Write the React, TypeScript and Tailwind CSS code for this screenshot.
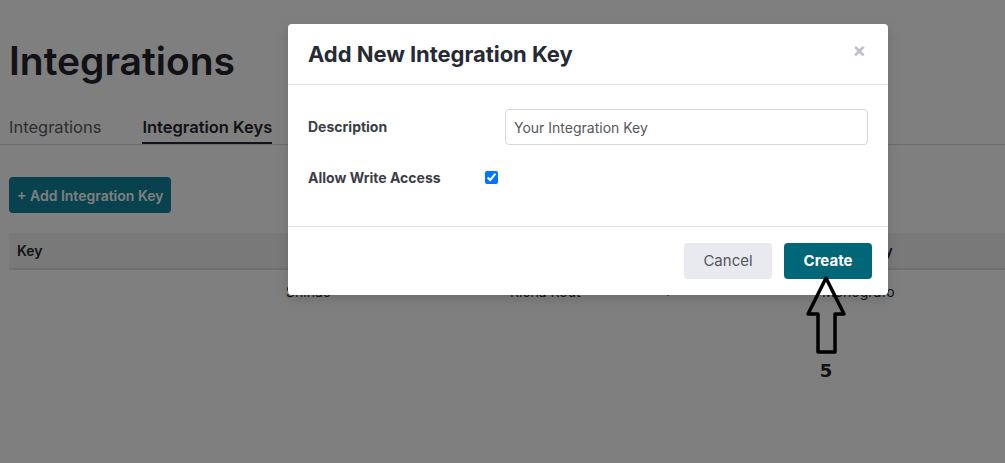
import React from "react";

export default function App() {
  return (
    <div
      className="relative w-[1005px] h-[463px] overflow-hidden bg-white"
      style={{ fontFamily: "Inter, 'Noto Sans', sans-serif" }}
    >
      {/* Page */}
      <div className="pt-[37px]">
        <h1 className="px-[9px] text-[39px] leading-[48px] font-semibold text-[#22222c]">
          Integrations
        </h1>
        <div className="mt-[31px] flex gap-[41px] px-[9px] border-b border-[#d8d8dc]">
          <div className="pb-[6px] text-[16.5px] leading-[22px] text-[#5a5a62]">Integrations</div>
          <div className="pb-[4px] text-[16.5px] leading-[22px] font-semibold text-[#26262e] border-b-2 border-[#26262e]">
            Integration Keys
          </div>
        </div>
        <div className="px-[9px] mt-[32px]">
          <button className="h-[36px] px-[8px] rounded-[4px] bg-[#10849e] text-white text-[14px] font-semibold">
            + Add Integration Key
          </button>
        </div>
        <div className="ml-[9px] mt-[20px]">
          <div className="grid grid-cols-[277px_224px_148px_160px_1fr] h-[37px] items-center bg-[#f2f2f4] border-b-2 border-[#e0e0e4] text-[14px] font-semibold text-[#26262e]">
            <div className="pl-[8px]">Key</div>
            <div className="pl-[3px]">Description</div>
            <div>Owner</div>
            <div>Write</div>
            <div>Created By</div>
          </div>
          <div className="grid grid-cols-[277px_224px_148px_160px_1fr] h-[42px] items-center text-[14px] text-[#26262e]">
            <div className="pl-[8px]"></div>
            <div>Shihao</div>
            <div>Richa Rout</div>
            <div className="pl-[5px]">✓</div>
            <div className="pl-[4px]">Monografo</div>
          </div>
        </div>
      </div>

      {/* Overlay */}
      <div className="absolute inset-0 bg-black/50" />

      {/* Modal */}
      <div className="absolute left-[288px] top-[24px] w-[600px] bg-white rounded-[4px] shadow-[0_4px_12px_rgba(0,0,0,0.15)]">
        <div className="h-[61px] flex items-center justify-between pl-[20px] pr-[22px] border-b border-[#dedee6]">
          <h2 className="text-[22px] font-bold text-[#272a33] tracking-[-0.05px]">Add New Integration Key</h2>
          <span className="text-[20px] leading-none text-[#c0c0c6] font-bold -mt-[8px]">×</span>
        </div>
        <div className="pt-[24px] pb-[31px] pl-[20px] pr-[20px] border-b border-[#dedee6]">
          <div className="flex items-center h-[36px]">
            <label className="w-[197px] text-[14px] font-bold text-[#3b3e46] -mt-[2px]">Description</label>
            <div className="flex-1 h-[36px] border border-[#d6d6e0] rounded-[4px] flex items-center px-[8px] text-[14px] text-[#555860]">
              Your Integration Key
            </div>
          </div>
          <div className="flex items-center h-[36px] mt-[14px]">
            <label className="w-[177px] text-[14px] font-bold text-[#3b3e46]">Allow Write Access</label>
            <input type="checkbox" defaultChecked className="m-0 w-[13px] h-[13px] accent-[#0075ff]" />
          </div>
        </div>
        <div className="h-[68px] flex items-center justify-end gap-[12px] pr-[16px]">
          <button className="w-[88px] h-[36px] rounded-[4px] bg-[#e9eaef] text-[15px] text-[#54565c]">Cancel</button>
          <button className="w-[88px] h-[36px] rounded-[4px] bg-[#006779] text-[15px] font-bold text-white">Create</button>
        </div>
      </div>

      {/* Annotation arrow */}
      <svg className="absolute left-[800px] top-[270px]" width="52" height="90" viewBox="800 270 52 90">
        <polygon
          points="826,278 808,314 818,314 818,352 835,352 835,314 844,314"
          fill="none"
          stroke="#000"
          strokeWidth="3.5"
          strokeLinejoin="round"
        />
      </svg>
      <div
        className="absolute left-[816px] top-[357px] w-[20px] text-center text-[18px] font-bold text-[#111]"
        style={{ fontFamily: "'DejaVu Sans', sans-serif" }}
      >
        5
      </div>
    </div>
  );
}
